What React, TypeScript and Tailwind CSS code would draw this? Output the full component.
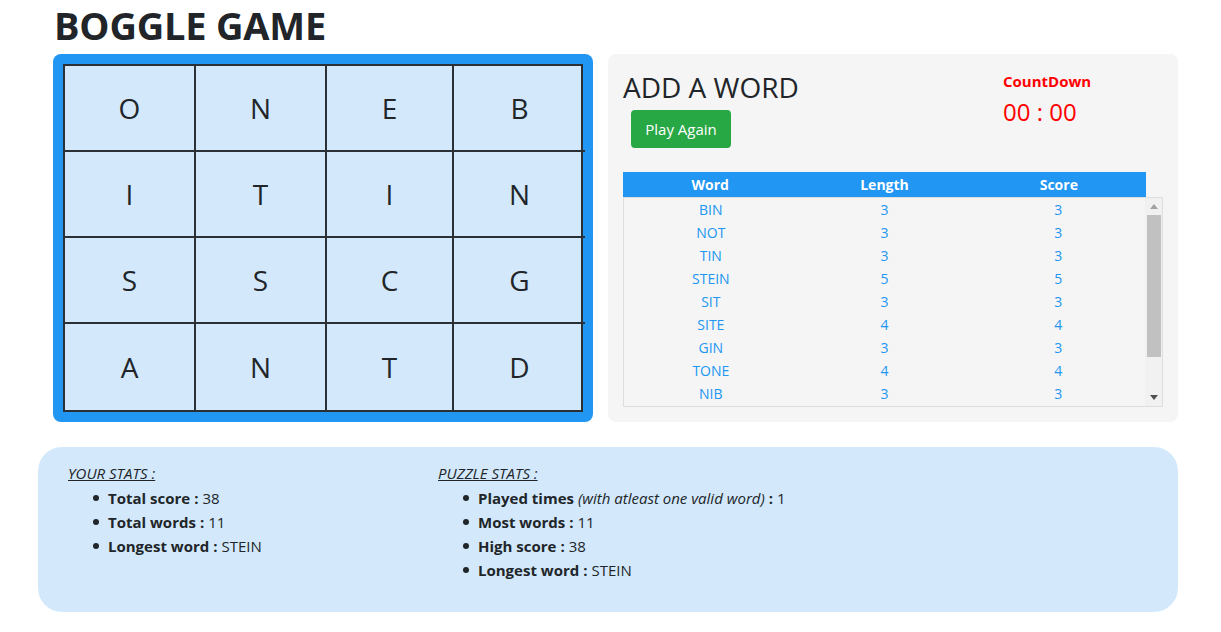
import React from 'react';

const board = [
  ['O', 'N', 'E', 'B'],
  ['I', 'T', 'I', 'N'],
  ['S', 'S', 'C', 'G'],
  ['A', 'N', 'T', 'D'],
];

// only the rows visible in the scroll window
const words: [string, number, number][] = [
  ['BIN', 3, 3],
  ['NOT', 3, 3],
  ['TIN', 3, 3],
  ['STEIN', 5, 5],
  ['SIT', 3, 3],
  ['SITE', 4, 4],
  ['GIN', 3, 3],
  ['TONE', 4, 4],
  ['NIB', 3, 3],
];

function Board() {
  return (
    <div className="w-[540px] h-[368px] bg-[#2196f3] rounded-lg p-[10px]">
      <div className="grid grid-cols-[131px_131px_127px_131px] grid-rows-4 h-full border-2 border-[#2b3035] bg-[#d3e9fb]">
        {board.map((row, r) =>
          row.map((ch, c) => (
            <div
              key={`${r}-${c}`}
              className={`flex items-center justify-center text-[28px] text-[#212529] border-[#2b3035] ${c < 3 ? 'border-r-2' : ''} ${r < 3 ? 'border-b-2' : ''}`}
            >
              {ch}
            </div>
          ))
        )}
      </div>
    </div>
  );
}

function WordTable() {
  return (
    <div className="w-[540px] text-[14px]">
      <div className="w-[523px] h-[25px] bg-[#2196f3] grid grid-cols-3 items-center text-white font-bold text-center">
        <div>Word</div>
        <div>Length</div>
        <div>Score</div>
      </div>
      <div className="flex h-[210px] border border-[#dedede] overflow-hidden">
        <div className="w-[522px]">
          {words.map(([w, l, s], i) => (
            <div key={i} className="h-[23px] grid grid-cols-3 items-center text-center text-[#2196f3]">
              <div>{w}</div>
              <div>{l}</div>
              <div>{s}</div>
            </div>
          ))}
        </div>
        <div className="w-[17px] bg-[#f1f1f1] flex flex-col items-center">
          <div className="h-[17px] flex items-center justify-center">
            <svg width="8" height="5" viewBox="0 0 8 5"><path d="M4 0 L8 5 L0 5 Z" fill="#a3a3a3" /></svg>
          </div>
          <div className="w-[14px] h-[142px] bg-[#c1c1c1]" />
          <div className="flex-1" />
          <div className="h-[17px] flex items-center justify-center">
            <svg width="8" height="5" viewBox="0 0 8 5"><path d="M0 0 L8 0 L4 5 Z" fill="#505050" /></svg>
          </div>
        </div>
      </div>
    </div>
  );
}

function StatItem({ label, value, note }: { label: string; value: string; note?: string }) {
  return (
    <li className="h-[24px] flex items-center">
      <span className="w-[6px] h-[6px] rounded-full bg-[#212529] mr-[9px] ml-[25px]" />
      <span className="font-bold">{label}</span>
      {note && <span className="italic ml-1">{note}</span>}
      <span className="font-bold ml-1">:</span>
      <span className="ml-1">{value}</span>
    </li>
  );
}

export default function App() {
  return (
    <div className="w-[1221px] h-[632px] bg-white text-[#212529] font-['Open_Sans',sans-serif]">
      <div className="ml-[38px] w-[1140px]">
        <h1 className="pl-[16px] pt-[1px] h-[54px] text-[38px] font-bold leading-[48px] tracking-[-0.2px]">BOGGLE GAME</h1>
        <div className="flex pl-[15px] gap-[15px]">
          <Board />
          <div className="w-[570px] h-[368px] bg-[#f5f5f5] rounded-lg pl-[15px] pt-[16px]">
            <div className="flex h-[102px]">
              <div>
                <h3 className="text-[28px] font-medium leading-[34px]">ADD A WORD</h3>
                <button className="mt-[6px] ml-[8px] w-[100px] h-[38px] bg-[#28a745] text-white text-[15px] rounded">Play Again</button>
              </div>
              <div className="ml-auto w-[175px]">
                <div className="text-[#ff0000] font-bold text-[15px] leading-[22px]">CountDown</div>
                <div className="text-[#ff0000] text-[24px] leading-[40px]">00 : 00</div>
              </div>
            </div>
            <WordTable />
          </div>
        </div>
        <div className="mt-[25px] h-[165px] bg-[#d3e9fb] rounded-[24px] pl-[30px] pt-[15px] flex text-[15px]">
          <div className="w-[370px]">
            <div className="italic underline h-[24px] leading-[22px]">YOUR STATS :</div>
            <ul>
              <StatItem label="Total score" value="38" />
              <StatItem label="Total words" value="11" />
              <StatItem label="Longest word" value="STEIN" />
            </ul>
          </div>
          <div>
            <div className="italic underline h-[24px] leading-[22px]">PUZZLE STATS :</div>
            <ul>
              <StatItem label="Played times" note="(with atleast one valid word)" value="1" />
              <StatItem label="Most words" value="11" />
              <StatItem label="High score" value="38" />
              <StatItem label="Longest word" value="STEIN" />
            </ul>
          </div>
        </div>
      </div>
    </div>
  );
}
